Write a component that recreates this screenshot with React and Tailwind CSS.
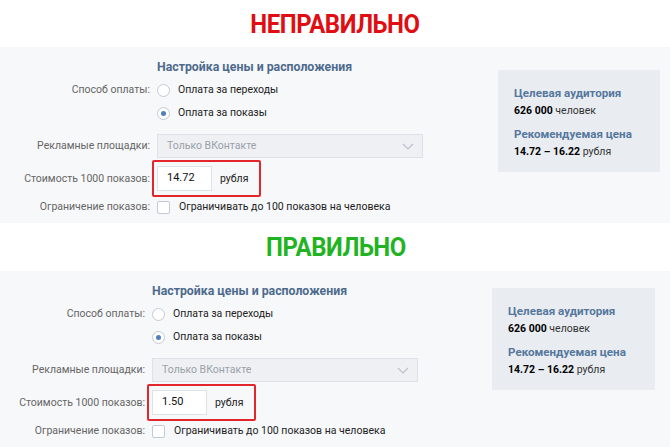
import React from "react";

const Radio = ({ checked }) => (
    <span className="w-[13px] h-[13px] rounded-full border border-[#c3cad3] bg-white flex items-center justify-center shrink-0">
        {checked && <span className="w-[5px] h-[5px] rounded-full bg-[#5181b8]" />}
    </span>
);

const Chevron = () => (
    <svg width="12" height="7" viewBox="0 0 12 7" fill="none">
        <path d="M1 1l5 5 5-5" stroke="#b8c1cc" strokeWidth="1.2" />
    </svg>
);

const Panel = ({ labelWidth, price, cardTop, cardRight, cardWidth }) => {
    const labelCls = "text-right text-[#656565] shrink-0";
    return (
        <div className="bg-[#f7f8fa] h-[176px] flex">
            <div className="flex flex-col pt-[12px]">
                <div className="flex h-4 items-center">
                    <div style={{ width: labelWidth }} />
                    <div className="ml-[7px] font-bold text-[12.3px] text-[#4d6a8d]">Настройка цены и расположения</div>
                </div>
                <div className="flex h-[18px] items-center mt-[6px]">
                    <div className={labelCls} style={{ width: labelWidth }}>Способ оплаты:</div>
                    <div className="ml-[7px] flex items-center gap-[8px] text-[#222]">
                        <Radio />
                        <span>Оплата за переходы</span>
                    </div>
                </div>
                <div className="flex h-[18px] items-center mt-[5px]">
                    <div style={{ width: labelWidth }} />
                    <div className="ml-[7px] flex items-center gap-[8px] text-[#222]">
                        <Radio checked />
                        <span>Оплата за показы</span>
                    </div>
                </div>
                <div className="flex h-[24px] items-center mt-[12px]">
                    <div className={labelCls} style={{ width: labelWidth }}>Рекламные площадки:</div>
                    <div className="ml-[7px] w-[266px] h-[24px] bg-[#eef0f3] border border-[#dde2e7] flex items-center justify-between pl-[9px] pr-[8px] text-[#9aa1a9]">
                        <span>Только ВКонтакте</span>
                        <Chevron />
                    </div>
                </div>
                <div className="flex h-[37px] items-center mt-[2px]">
                    <div className={labelCls} style={{ width: labelWidth }}>Стоимость 1000 показов:</div>
                    <div className="ml-[2px] w-[109px] h-[37px] border-2 border-[#e3262c] rounded-[2px] flex items-center pl-[3px]">
                        <div className="w-[55px] h-[25px] bg-white border border-[#dfe3e8] flex items-center pl-[9px] text-[#111] text-[11px]">{price}</div>
                        <span className="ml-[8px] text-[#222]">рубля</span>
                    </div>
                </div>
                <div className="flex h-[16px] items-center mt-[2px]">
                    <div className={labelCls} style={{ width: labelWidth }}>Ограничение показов:</div>
                    <div className="ml-[7px] flex items-center gap-[9px] text-[#222]">
                        <span className="w-[13px] h-[13px] bg-white border border-[#c3cad3] rounded-[2px]" />
                        <span>Ограничивать до 100 показов на человека</span>
                    </div>
                </div>
            </div>
            <div
                className="ml-auto bg-[#e9edf1] h-[102px] pl-[16px] pt-[14px] text-[10.5px] leading-[18px]"
                style={{ marginTop: cardTop, marginRight: cardRight, width: cardWidth }}
            >
                <div className="font-bold text-[11.6px] text-[#56779e]">Целевая аудитория</div>
                <div className="text-[#333]"><b className="text-black">626 000</b> человек</div>
                <div className="font-bold text-[11.6px] text-[#56779e] mt-[5px]">Рекомендуемая цена</div>
                <div className="text-[#333]"><b className="text-black">14.72 – 16.22</b> рубля</div>
            </div>
        </div>
    );
};

const App = () => {
    return (
        <div className="w-[670px] h-[447px] bg-white overflow-hidden font-['Roboto',sans-serif] text-[10.5px]">
            <div className="h-[47px] flex items-center justify-center pt-[1px]">
                <span className="font-bold text-[26px] tracking-[-0.5px] text-[#e00d12] scale-x-[0.92]">НЕПРАВИЛЬНО</span>
            </div>
            <Panel labelWidth={150} price="14.72" cardTop={23} cardRight={10} cardWidth={162} />
            <div className="h-[48px] flex items-center justify-center">
                <span className="font-bold text-[26px] tracking-[-0.5px] text-[#22b322] scale-x-[0.92] ml-[1px]">ПРАВИЛЬНО</span>
            </div>
            <Panel labelWidth={145} price="1.50" cardTop={17} cardRight={15} cardWidth={163} />
        </div>
    );
};

export default App;
